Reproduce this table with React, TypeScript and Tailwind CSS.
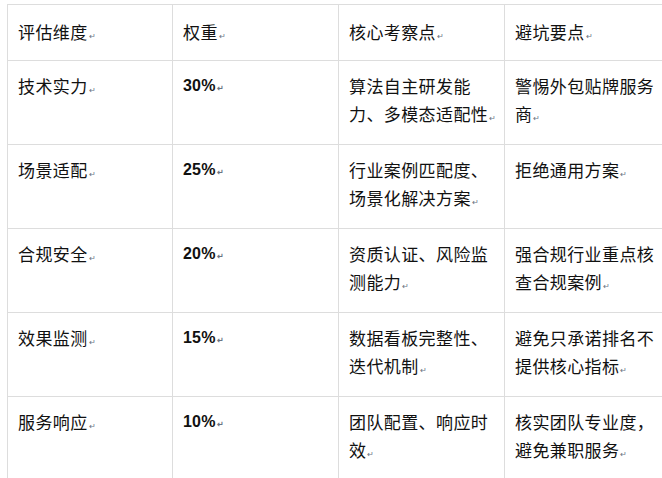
import React from 'react';

const rows: string[][] = [
  ['技术实力', '30%', '算法自主研发能力、多模态适配性', '警惕外包贴牌服务商'],
  ['场景适配', '25%', '行业案例匹配度、场景化解决方案', '拒绝通用方案'],
  ['合规安全', '20%', '资质认证、风险监测能力', '强合规行业重点核查合规案例'],
  ['效果监测', '15%', '数据看板完整性、迭代机制', '避免只承诺排名不提供核心指标'],
  ['服务响应', '10%', '团队配置、响应时效', '核实团队专业度，避免兼职服务'],
];

const headers = ['评估维度', '权重', '核心考察点', '避坑要点'];

// text with the word processor's little paragraph mark glued to the last char
const Para: React.FC<{ text: string }> = ({ text }) => (
  <>
    {text.slice(0, -1)}
    <span className="whitespace-nowrap">
      {text.slice(-1)}
      <span className="text-[8px] leading-none text-gray-500 ml-[1px] mr-[-6px] tracking-normal">↵</span>
    </span>
  </>
);

const Cell: React.FC<{ text: string; latin?: boolean }> = ({ text, latin }) => (
  <td
    className={`border border-[#dddddd] align-top pl-[10px] pr-[5px] pt-[11px] pb-[14px] leading-[28px] h-[84px] ${
      latin ? 'font-["Liberation_Sans",sans-serif] font-bold tracking-[0.2px] text-[16px]' : ''
    }`}
  >
    <Para text={text} />
  </td>
);

export default function App() {
  return (
    <div className="w-[662px] h-[478px] overflow-hidden bg-white">
      <div className="pt-[4px] pl-[7px]">
        <table className="border-collapse table-fixed w-[664px] text-[17px] tracking-[0.4px] text-[#111] font-['Noto_Sans_CJK_SC','Noto_Sans',sans-serif]">
          <colgroup>
            <col className="w-[165px]" />
            <col className="w-[166px]" />
            <col className="w-[166px]" />
            <col className="w-[167px]" />
          </colgroup>
          <thead>
            <tr className="h-[56px]">
              {headers.map((h) => (
                <th
                  key={h}
                  className="border border-[#dddddd] text-left font-normal align-top pl-[10px] pr-[5px] pt-[13px] pb-[13px] leading-[28px]"
                >
                  <Para text={h} />
                </th>
              ))}
            </tr>
          </thead>
          <tbody>
            {rows.map((r) => (
              <tr key={r[0]} className="h-[84px]">
                <Cell text={r[0]} />
                <Cell text={r[1]} latin />
                <Cell text={r[2]} />
                <Cell text={r[3]} />
              </tr>
            ))}
          </tbody>
        </table>
      </div>
    </div>
  );
}
